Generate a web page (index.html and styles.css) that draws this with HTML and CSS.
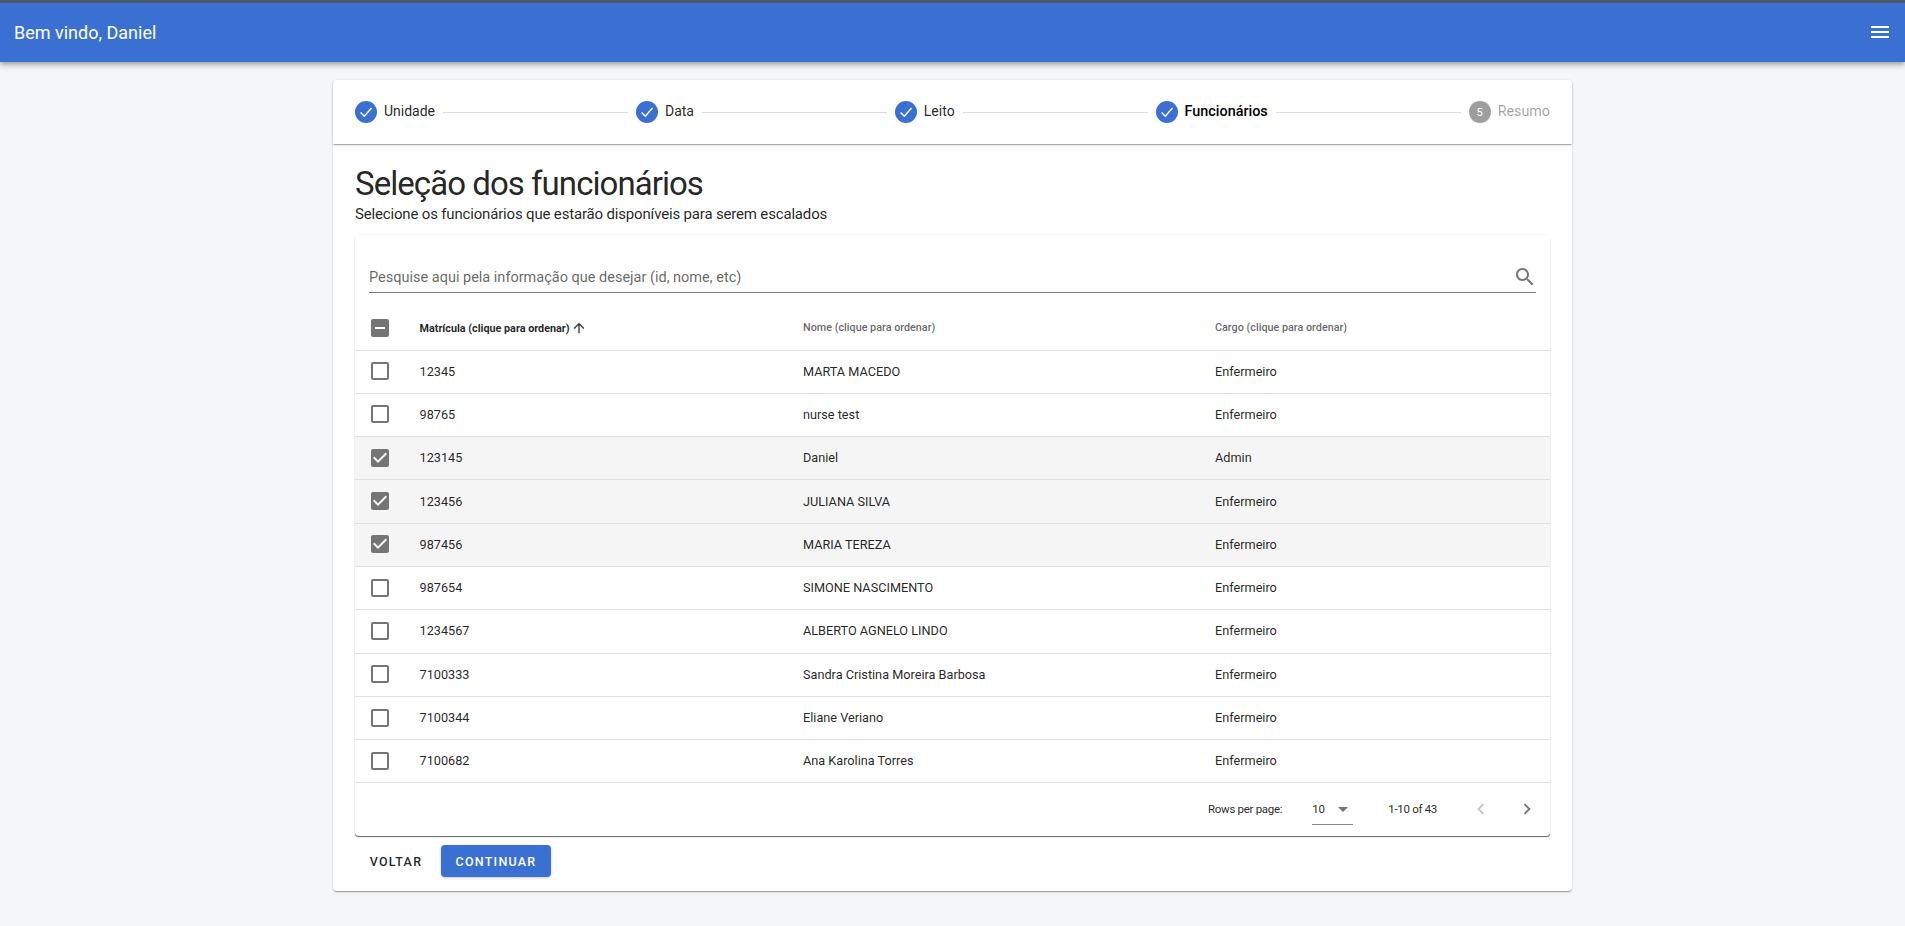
FILE: index.html
```html
<!DOCTYPE html>
<html lang="pt-BR">
<head>
  <meta charset="UTF-8" />
  <meta name="viewport" content="width=device-width, initial-scale=1.0" />
  <title>Seleção dos funcionários</title>
  <link rel="stylesheet" href="styles.css">
</head>
<body>
  <header class="app-bar">
    <span class="app-title">Bem vindo, Daniel</span>
    <svg class="menu-icon" viewBox="0 0 24 24"><path d="M3 18h18v-2H3v2zm0-5h18v-2H3v2zm0-7v2h18V6H3z"/></svg>
  </header>

  <main class="card">
    <nav class="stepper">
      <div class="step">
        <svg class="step-icon" viewBox="1 1 22 22"><circle cx="12" cy="12" r="11"/><path class="tick" d="M6.6 12.6l3.7 3.7 7.2-8.3"/></svg>
        <span class="step-label">Unidade</span>
      </div>
      <div class="step-line"></div>
      <div class="step">
        <svg class="step-icon" viewBox="1 1 22 22"><circle cx="12" cy="12" r="11"/><path class="tick" d="M6.6 12.6l3.7 3.7 7.2-8.3"/></svg>
        <span class="step-label">Data</span>
      </div>
      <div class="step-line"></div>
      <div class="step">
        <svg class="step-icon" viewBox="1 1 22 22"><circle cx="12" cy="12" r="11"/><path class="tick" d="M6.6 12.6l3.7 3.7 7.2-8.3"/></svg>
        <span class="step-label">Leito</span>
      </div>
      <div class="step-line"></div>
      <div class="step">
        <svg class="step-icon" viewBox="1 1 22 22"><circle cx="12" cy="12" r="11"/><path class="tick" d="M6.6 12.6l3.7 3.7 7.2-8.3"/></svg>
        <span class="step-label active">Funcionários</span>
      </div>
      <div class="step-line"></div>
      <div class="step">
        <span class="step-number">5</span>
        <span class="step-label disabled">Resumo</span>
      </div>
    </nav>

    <section class="content">
      <h1>Seleção dos funcionários</h1>
      <p class="subtitle">Selecione os funcionários que estarão disponíveis para serem escalados</p>

      <div class="table-paper">
        <div class="search-bar">
          <div class="search-field">
            <span class="search-text">Pesquise aqui pela informação que desejar (id, nome, etc)</span>
            <svg class="search-icon" viewBox="0 0 24 24"><path d="M15.5 14h-.79l-.28-.27C15.41 12.59 16 11.11 16 9.5 16 5.91 13.09 3 9.5 3S3 5.91 3 9.5 5.91 16 9.5 16c1.61 0 3.09-.59 4.23-1.57l.27.28v.79l5 4.99L20.49 19l-4.99-5zm-6 0C7.01 14 5 11.99 5 9.5S7.01 5 9.5 5 14 7.01 14 9.5 11.99 14 9.5 14z"/></svg>
          </div>
        </div>

        <table class="staff-table">
          <thead>
            <tr>
              <th class="col-check"><svg class="box" viewBox="0 0 24 24"><path d="M19 3H5c-1.1 0-2 .9-2 2v14c0 1.1.9 2 2 2h14c1.1 0 2-.9 2-2V5c0-1.1-.9-2-2-2zm-2 10H7v-2h10v2z"/></svg></th>
              <th class="col-id sorted">Matrícula (clique para ordenar)<svg class="sort-icon" viewBox="0 0 24 24"><path d="M4 12l1.41 1.41L11 7.83V20h2V7.83l5.58 5.59L20 12l-8-8-8 8z"/></svg></th>
              <th class="col-name">Nome (clique para ordenar)</th>
              <th>Cargo (clique para ordenar)</th>
            </tr>
          </thead>
          <tbody id="rows"></tbody>
        </table>

        <div class="pagination">
          <span class="rows-label">Rows per page:</span>
          <div class="rows-select">
            <span>10</span>
            <svg class="select-arrow" viewBox="0 0 24 24"><path d="M7 10l5 5 5-5z"/></svg>
          </div>
          <span class="page-range">1-10 of 43</span>
          <svg class="page-icon off" viewBox="0 0 24 24"><path d="M15.41 7.41L14 6l-6 6 6 6 1.41-1.41L10.83 12z"/></svg>
          <svg class="page-icon" viewBox="0 0 24 24"><path d="M10 6L8.59 7.41 13.17 12l-4.58 4.59L10 18l6-6z"/></svg>
        </div>
      </div>

      <div class="actions">
        <button class="btn-back" type="button">Voltar</button>
        <button class="btn-next" type="button">Continuar</button>
      </div>
    </section>
  </main>

  <script>
    const staff = [
      ["12345", "MARTA MACEDO", "Enfermeiro", false],
      ["98765", "nurse test", "Enfermeiro", false],
      ["123145", "Daniel", "Admin", true],
      ["123456", "JULIANA SILVA", "Enfermeiro", true],
      ["987456", "MARIA TEREZA", "Enfermeiro", true],
      ["987654", "SIMONE NASCIMENTO", "Enfermeiro", false],
      ["1234567", "ALBERTO AGNELO LINDO", "Enfermeiro", false],
      ["7100333", "Sandra Cristina Moreira Barbosa", "Enfermeiro", false],
      ["7100344", "Eliane Veriano", "Enfermeiro", false],
      ["7100682", "Ana Karolina Torres", "Enfermeiro", false]
    ];

    const checked = "M19 3H5c-1.11 0-2 .9-2 2v14c0 1.1.89 2 2 2h14c1.11 0 2-.9 2-2V5c0-1.1-.89-2-2-2zm-9 14l-5-5 1.41-1.41L10 14.17l7.59-7.59L19 8l-9 9z";
    const unchecked = "M19 5v14H5V5h14m0-2H5c-1.1 0-2 .9-2 2v14c0 1.1.9 2 2 2h14c1.1 0 2-.9 2-2V5c0-1.1-.9-2-2-2z";

    let rowsHTML = "";
    staff.forEach(person => {
      rowsHTML += `
        <tr class="${person[3] ? "selected" : ""}">
          <td class="col-check"><svg class="box" viewBox="0 0 24 24"><path d="${person[3] ? checked : unchecked}"/></svg></td>
          <td>${person[0]}</td>
          <td>${person[1]}</td>
          <td>${person[2]}</td>
        </tr>
      `;
    });
    document.getElementById("rows").innerHTML = rowsHTML;
  </script>
</body>
</html>
```

FILE: styles.css
```css
* {
  margin: 0;
  padding: 0;
  box-sizing: border-box;
  font-family: 'Roboto', sans-serif;
}

body {
  min-height: 100vh;
  background-color: #f5f6f8;
  color: rgba(0, 0, 0, 0.87);
}

.app-bar {
  height: 62px;
  border-top: 3px solid #4a5a66;
  background-color: #3a70d1;
  color: #fff;
  display: flex;
  align-items: center;
  justify-content: space-between;
  padding: 0 14px;
  box-shadow: 0 2px 4px -1px rgba(0, 0, 0, 0.2), 0 4px 5px 0 rgba(0, 0, 0, 0.14), 0 1px 10px 0 rgba(0, 0, 0, 0.12);
}

.app-title {
  font-size: 18px;
}

.menu-icon {
  width: 24px;
  height: 24px;
  fill: #fff;
  margin-right: -1px;
  margin-top: -2px;
}

.card {
  width: 1239px;
  margin: 18px auto 0;
  background-color: #fff;
  border-radius: 4px;
  box-shadow: 0 2px 1px -1px rgba(0, 0, 0, 0.2), 0 1px 1px 0 rgba(0, 0, 0, 0.14), 0 1px 3px 0 rgba(0, 0, 0, 0.12);
}

.stepper {
  height: 64px;
  display: flex;
  align-items: center;
  padding: 0 22px;
  border-radius: 4px 4px 0 0;
  box-shadow: 0 2px 1px -1px rgba(0, 0, 0, 0.2), 0 1px 1px 0 rgba(0, 0, 0, 0.14), 0 1px 3px 0 rgba(0, 0, 0, 0.12);
}

.step {
  display: flex;
  align-items: center;
  gap: 7px;
}

.step-icon {
  width: 22px;
  height: 22px;
}

.step-icon circle {
  fill: #3a70d1;
}

.step-icon .tick {
  fill: none;
  stroke: #fff;
  stroke-width: 1.4;
}

.step-number {
  width: 22px;
  height: 22px;
  border-radius: 50%;
  background-color: #9e9e9e;
  color: #fff;
  font-size: 11px;
  display: flex;
  align-items: center;
  justify-content: center;
}

.step-label {
  font-size: 14px;
  margin-bottom: 2px;
}

.step-label.active {
  font-size: 14.4px;
  color: #000;
  font-weight: 500;
}

.step-label.disabled {
  font-size: 14.3px;
  color: rgba(0, 0, 0, 0.38);
}

.step-line {
  flex: 1;
  height: 1px;
  margin: 0 8px;
  background-color: #dcdcdc;
}

.content {
  padding: 20px 22px 14px;
}

h1 {
  font-size: 33px;
  font-weight: 400;
  letter-spacing: -0.95px;
  line-height: 40px;
  color: rgba(0, 0, 0, 0.87);
}

.subtitle {
  font-size: 15px;
  letter-spacing: -0.17px;
  line-height: 20px;
}

.table-paper {
  margin-top: 11px;
  border-radius: 4px;
  box-shadow: 0 -1px 1px 0 rgba(0, 0, 0, 0.03), 0 1.5px 1px -0.5px rgba(0, 0, 0, 0.6);
}

.search-bar {
  padding: 24px 14px 0;
  height: 72px;
}

.search-field {
  height: 34px;
  padding-top: 3px;
  display: flex;
  align-items: center;
  justify-content: space-between;
  border-bottom: 1px solid #777;
}

.search-text {
  font-size: 14.5px;
  color: rgba(0, 0, 0, 0.62);
}

.search-icon {
  width: 24px;
  height: 24px;
  fill: #757575;
  margin-right: -1px;
}

.staff-table {
  width: 100%;
  border-collapse: collapse;
  table-layout: fixed;
  font-size: 12.7px;
}

.staff-table tr {
  height: 43.3px;
}

.staff-table thead tr {
  height: 43px;
}

.staff-table th {
  font-size: 10.8px;
  font-weight: 500;
  text-align: left;
  color: rgba(0, 0, 0, 0.62);
}

.staff-table th.sorted {
  color: rgba(0, 0, 0, 0.87);
  font-weight: 700;
}

.staff-table th,
.staff-table td {
  padding-bottom: 1px;
  border-bottom: 1px solid #e0e0e0;
  vertical-align: middle;
}

.staff-table .selected {
  background-color: #f5f5f5;
}

.col-check {
  width: 64.5px;
  padding-left: 13px;
}

.col-id {
  width: 383.5px;
}

.col-name {
  width: 412px;
}

.box {
  display: block;
  width: 24px;
  height: 24px;
  fill: #757575;
}

.sort-icon {
  width: 16px;
  height: 16px;
  fill: #333;
  vertical-align: -4px;
  margin-left: 1px;
}

.pagination {
  height: 53px;
  padding: 0 12px 2px 0;
  display: flex;
  align-items: center;
  justify-content: flex-end;
  font-size: 11.5px;
  letter-spacing: -0.3px;
  color: rgba(0, 0, 0, 0.87);
}

.rows-select {
  width: 41px;
  height: 30px;
  margin-left: 30px;
  display: flex;
  align-items: center;
  justify-content: space-between;
  border-bottom: 1px solid #8a8a8a;
  margin-top: 2px;
}

.select-arrow {
  width: 24px;
  height: 24px;
  fill: #757575;
  margin-right: -2px;
}

.page-range {
  margin-left: 35px;
  margin-right: 33px;
}

.page-icon {
  width: 22px;
  height: 22px;
  fill: #757575;
}

.page-icon + .page-icon {
  margin-left: 24px;
}

.page-icon.off {
  fill: #c4c4c4;
}

.actions {
  display: flex;
  gap: 8px;
  margin-top: 9px;
}

button {
  height: 32px;
  border: none;
  border-radius: 4px;
  font-size: 12.5px;
  font-weight: 500;
  letter-spacing: 1.25px;
  text-transform: uppercase;
  cursor: pointer;
}

.btn-back {
  width: 78px;
  padding-left: 4px;
  background: none;
  color: rgba(0, 0, 0, 0.87);
}

.btn-next {
  width: 110px;
  background-color: #3a70d1;
  color: #fff;
  box-shadow: 0 1px 3px rgba(0, 0, 0, 0.2);
}
```
